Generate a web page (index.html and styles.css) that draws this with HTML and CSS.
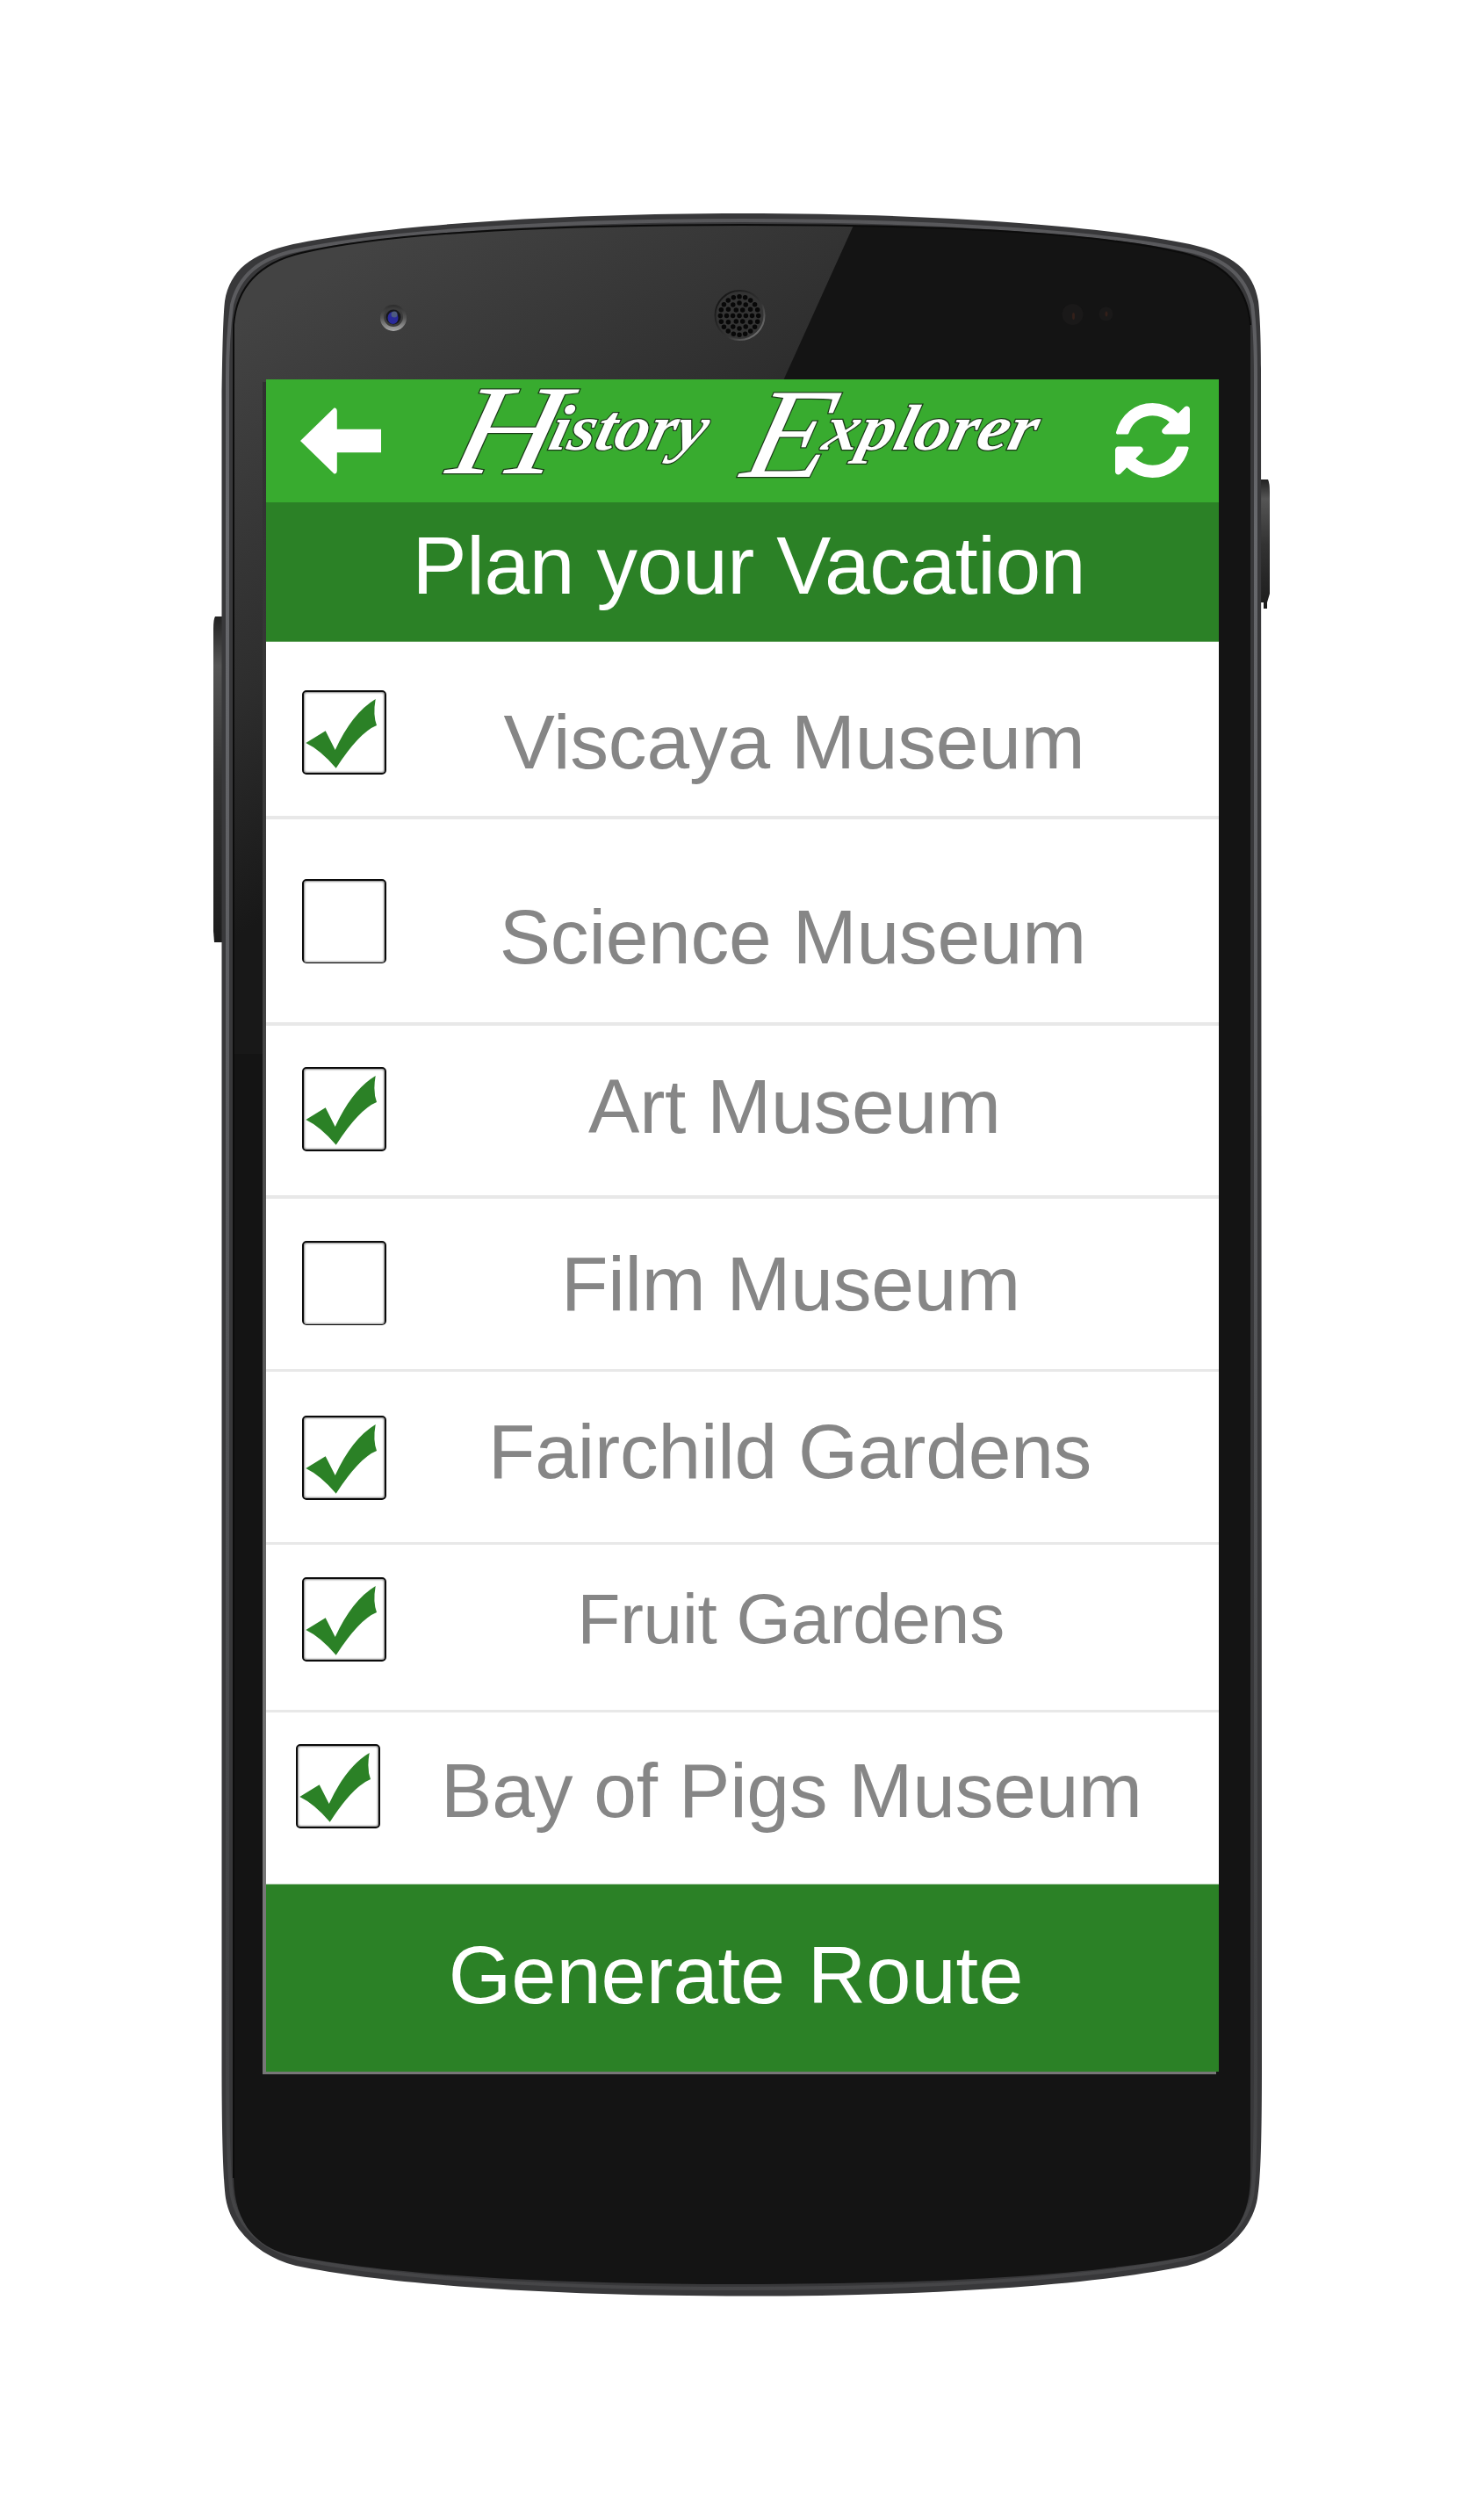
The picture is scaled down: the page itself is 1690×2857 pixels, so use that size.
FILE: index.html
```html
<!DOCTYPE html>
<html lang="en">
<head>
<meta charset="utf-8">
<title>History Explorer</title>
<link rel="stylesheet" href="styles.css">
</head>
<body>
<svg class="defs" width="0" height="0" aria-hidden="true">
  <symbol id="tick" viewBox="0 0 96 96">
    <path d="M4.3 60L26.7 46.3L37.7 68Q57 26 83.7 10Q80.500 28 85 40Q65 48 38.700 88.700Q21 68 4.300 60Z"/>
  </symbol>
</svg>
<main class="stage">
  <svg class="device" viewBox="0 0 1690 2857" aria-hidden="true">
    <defs>
      <linearGradient id="glare" gradientUnits="userSpaceOnUse" x1="330" y1="330" x2="639" y2="845">
        <stop offset="0" stop-color="#434343"/><stop offset=".6" stop-color="#2e2e2e"/><stop offset="1" stop-color="#181818"/>
      </linearGradient>
      <linearGradient id="rim" x1="0" y1="0" x2="0" y2="1">
        <stop offset="0" stop-color="#58585b"/><stop offset=".15" stop-color="#68696d"/><stop offset=".6" stop-color="#505154"/><stop offset=".85" stop-color="#404143"/><stop offset="1" stop-color="#464648"/>
      </linearGradient>
      <linearGradient id="key" x1="0" y1="0" x2="0" y2="1">
        <stop offset="0" stop-color="#222"/><stop offset=".15" stop-color="#555"/><stop offset=".5" stop-color="#333"/><stop offset="1" stop-color="#1c1c1c"/>
      </linearGradient>
      <linearGradient id="ring" x1="0" y1="0" x2="0" y2="1">
        <stop offset="0" stop-color="#2c2c2c"/><stop offset=".5" stop-color="#555"/><stop offset="1" stop-color="#aaa"/>
      </linearGradient>
      <linearGradient id="lip" x1="0" y1="0" x2="1" y2="1">
        <stop offset="0" stop-color="#111"/><stop offset=".6" stop-color="#333"/><stop offset="1" stop-color="#8a8a8a"/>
      </linearGradient>
      <clipPath id="face">
        <path d="M845 256C1070 256 1250 265 1347 288C1385 297 1420 318 1424 370V2480C1423 2530 1400 2558 1360 2568C1240 2592 1050 2601 845 2601C640 2601 450 2592 330 2568C290 2558 267 2530 266 2480V370C270 318 305 297 343 288C440 265 620 256 845 256Z"/>
      </clipPath>
    </defs>
    <path fill="url(#key)" d="M254 702H245Q243 705 243 716V1060L244 1073H254Z"/>
    <path fill="url(#key)" d="M1434 546H1444Q1446 550 1446 560V676L1443 686V693H1439V686H1434Z"/>
    <path fill="#38383a" d="M845 243C1070 243 1259 258 1355 278C1404 289 1427 308 1433 343C1435 360 1436 390 1436 420L1437 2120V2348C1437 2430 1436 2480 1432 2503C1427 2535 1399 2568 1352 2580C1239 2603 1050 2614.500 850 2614.500C640 2614.500 450 2603 337 2580C290 2568 262 2535 257 2503C254 2480 252.500 2430 252.500 2348V453C253 410 254 360 256 343C262 308 285 289 334 278C430 258 620 243 845 243Z"/>
    <path fill="none" stroke="url(#rim)" stroke-width="4" d="M845 251C1070 251 1258 265 1352 285C1395 294 1418 314 1426 347C1429 370 1430 400 1430 430V2348C1430 2430 1429 2480 1426 2500C1420 2533 1394 2560 1350 2572C1240 2595 1050 2606 845 2606C640 2606 450 2595 340 2572C296 2560 270 2533 264 2500C261 2480 259 2430 259 2348V430C259 400 261 370 264 347C272 314 295 294 338 285C432 265 620 251 845 251Z"/>
    <g clip-path="url(#face)">
      <path fill="#141414" d="M250 240H1440V2620H250Z"/>
      <path fill="url(#glare)" d="M250 240H979.500L545 1200H250Z"/>
    </g>
    <path fill="none" stroke="#0c0c0c" stroke-width="2" d="M266 2480V370C270 318 305 297 343 288C440 265 620 256 845 256C1070 256 1250 265 1347 288C1385 297 1420 318 1424 370"/>
    <circle cx="448" cy="362" r="15" fill="url(#ring)"/>
    <circle cx="448" cy="361" r="11" fill="#3c3c3c"/>
    <circle cx="448" cy="361" r="8.500" fill="#17171c"/>
    <ellipse cx="447.500" cy="362" rx="6" ry="7" fill="#2a2a9a"/>
    <circle cx="449" cy="358" r="3.500" fill="#4d5a80"/>
    <circle cx="842.500" cy="359" r="28" fill="#343434" stroke="url(#lip)" stroke-width="2"/>
    <g fill="none" stroke="#080808" stroke-width="5.500" stroke-linecap="round">
      <circle cx="842" cy="359.500" r="21.700" pathLength="20" stroke-dasharray="0 1"/>
      <circle cx="842" cy="359.500" r="14.500" pathLength="12" stroke-dasharray="0 1"/>
      <circle cx="842" cy="359.500" r="7.400" pathLength="6" stroke-dasharray="0 1"/>
      <path d="M842 359.500h.01"/>
    </g>
    <circle cx="1221.500" cy="358" r="12" fill="#1a1919"/><ellipse cx="1222.500" cy="360" rx="1.500" ry="4" fill="#33201a"/>
    <circle cx="1259.500" cy="357.500" r="8" fill="#1a1919"/><ellipse cx="1260" cy="357.500" rx="1.500" ry="3" fill="#33201a"/>
  </svg>

  <section class="screen">
    <header class="bar">
      <svg class="back" viewBox="0 0 92 76" aria-label="Back"><path d="M0 38L38.500 .5Q41.500 0 41.800 4V24.700H92V51.300H41.800V72Q41.500 76 38.500 75.500Z"/></svg>
      <svg class="brand" viewBox="500 432 700 140" role="img" aria-label="History Explorer">
        <g transform="translate(512 0) skewX(-14) translate(-512 0)">
          <text><tspan x="641" y="539" class="cap" textLength="122" lengthAdjust="spacingAndGlyphs">H</tspan><tspan x="750" y="512" class="low" textLength="178" lengthAdjust="spacingAndGlyphs">istory</tspan></text>
          <text><tspan x="977" y="543" class="cap" textLength="96" lengthAdjust="spacingAndGlyphs">E</tspan><tspan x="1062" y="512" class="low" textLength="242" lengthAdjust="spacingAndGlyphs">xplorer</tspan></text>
        </g>
      </svg>
      <svg class="refresh" viewBox="0 0 1536 1536" aria-label="Refresh"><path d="M1511 928q0 5-1 7-64 268-268 434.500t-478 166.500q-146 0-282.500-55t-243.500-157l-129 129q-19 19-45 19t-45-19-19-45v-448q0-26 19-45t45-19h448q26 0 45 19t19 45-19 45l-137 137q71 66 161 102t187 36q134 0 250-65t186-179q11-17 53-117 8-23 30-23h192q13 0 22.500 9.500t9.500 22.500zm25-800v448q0 26-19 45t-45 19h-448q-26 0-45-19t-19-45 19-45l138-138q-148-137-349-137-134 0-250 65t-186 179q-11 17-53 117-8 23-30 23h-199q-13 0-22.500-9.500t-9.500-22.500v-7q65-268 270-434.500t480-166.500q146 0 284 55.500t245 156.500l130-129q19-19 45-19t45 19 19 45z"/></svg>
    </header>
    <h1 class="heading">Plan your Vacation</h1>
    <ul class="places">
      <li class="place viscaya"><span class="box"><svg><use href="#tick"/></svg></span><span class="label">Viscaya Museum</span></li>
      <li class="place science"><span class="box empty"></span><span class="label">Science Museum</span></li>
      <li class="place art"><span class="box"><svg><use href="#tick"/></svg></span><span class="label">Art Museum</span></li>
      <li class="place film"><span class="box empty"></span><span class="label">Film Museum</span></li>
      <li class="place fairchild"><span class="box"><svg><use href="#tick"/></svg></span><span class="label">Fairchild Gardens</span></li>
      <li class="place fruit"><span class="box"><svg><use href="#tick"/></svg></span><span class="label">Fruit Gardens</span></li>
      <li class="place pigs"><span class="box"><svg><use href="#tick"/></svg></span><span class="label">Bay of Pigs Museum</span></li>
    </ul>
    <footer class="action">Generate Route</footer>
  </section>
</main>
</body>
</html>
```
FILE: styles.css
```css
* { box-sizing: border-box; }
body {
  margin: 0;
  background: #fff;
  font-family: "Liberation Sans", Arial, sans-serif;
}
.defs { position: absolute; }
.stage {
  position: relative;
  width: 1690px;
  height: 2857px;
  padding: 432px 302px 0 299px;
  overflow: hidden;
}
.device {
  position: absolute;
  inset: 0;
  width: 1690px;
  height: 2857px;
}
.screen {
  position: relative;
  width: 1089px;
  height: 1930px;
  padding: 0 0 3px 4px;
  background:
    linear-gradient(#777, #777) 0 100% / 1086px 3px no-repeat,
    linear-gradient(#303030, #3c3c3c 30%, #777 85%) 0 3px / 4px 100% no-repeat;
}
.bar {
  display: flex;
  align-items: flex-start;
  height: 140px;
  padding-left: 39px;
  background: #38ab2f;
}
.back { width: 92px; height: 76px; margin-top: 32px; fill: #fff; }
.brand { width: 700px; height: 140px; margin-left: 66px; overflow: visible; }
.brand text {
  font-family: "Liberation Serif", "Times New Roman", serif;
  font-style: italic;
  fill: #fff;
  stroke: #1c3a1a;
  stroke-width: 2.5px;
  paint-order: stroke;
}
.cap { font-size: 146px; }
.low { font-size: 74px; font-weight: 700; }
.refresh { width: 85px; height: 85px; margin: 26.500px 0 0 69.500px; fill: #fff; }
.heading {
  height: 159px;
  margin: 0;
  padding: 21.800px 0 0 166.500px;
  background: #2b8126;
  border-bottom: 1px solid #6aa766;
  color: #fff;
  font-size: 93px;
  font-weight: 400;
  line-height: 100px;
  letter-spacing: -.4px;
  white-space: nowrap;
}
.places {
  margin: 0;
  padding: 0;
  list-style: none;
  background: #fff;
}
.place {
  display: flex;
  align-items: flex-start;
  padding-left: 41px;
  border-bottom: 3px solid #e8e8e8;
}
.box {
  flex: none;
  width: 96px;
  height: 96px;
  border: 2px solid #0a0a0a;
  border-radius: 5px;
  box-shadow: inset 0 0 2px 1px #8a8a8a;
}
.empty { border-bottom-width: 1px; }
.box svg {
  display: block;
  width: 96px;
  height: 96px;
  margin: -2px;
  fill: #2b8126;
}
.label {
  color: #868686;
  font-size: 87.500px;
  line-height: 100px;
  letter-spacing: -.2px;
  white-space: nowrap;
}
.viscaya { height: 202px; border-bottom-width: 4px; }
.viscaya .box { margin-top: 55px; }
.viscaya .label { margin: 63.700px 0 0 133.500px; }
.science { height: 235px; border-bottom-width: 4px; }
.science .box { margin-top: 68px; }
.science .label { margin: 84.400px 0 0 128.700px; }
.art { height: 197px; border-bottom-width: 4px; }
.art .box { margin-top: 47px; }
.art .label { margin: 41.700px 0 0 230px; }
.film { height: 197px; }
.film .box { margin-top: 48px; }
.film .label { margin: 47.400px 0 0 199px; }
.fairchild { height: 197px; }
.fairchild .box { margin-top: 50px; }
.fairchild .label { margin: 41px 0 0 116px; }
.fruit { height: 191px; }
.fruit .box { margin-top: 37px; }
.fruit .label { margin: 35.300px 0 0 217.500px; font-size: 80px; }
.pigs { height: 196px; padding-left: 34px; border-bottom: 1px solid #9fc59d; }
.pigs .box { margin-top: 36px; }
.pigs .label { margin: 39px 0 0 69px; }
.action {
  height: 213px;
  padding: 53px 0 0 207.700px;
  background: #2b8126;
  color: #fff;
  font-size: 92px;
  line-height: 100px;
  white-space: nowrap;
}
```
